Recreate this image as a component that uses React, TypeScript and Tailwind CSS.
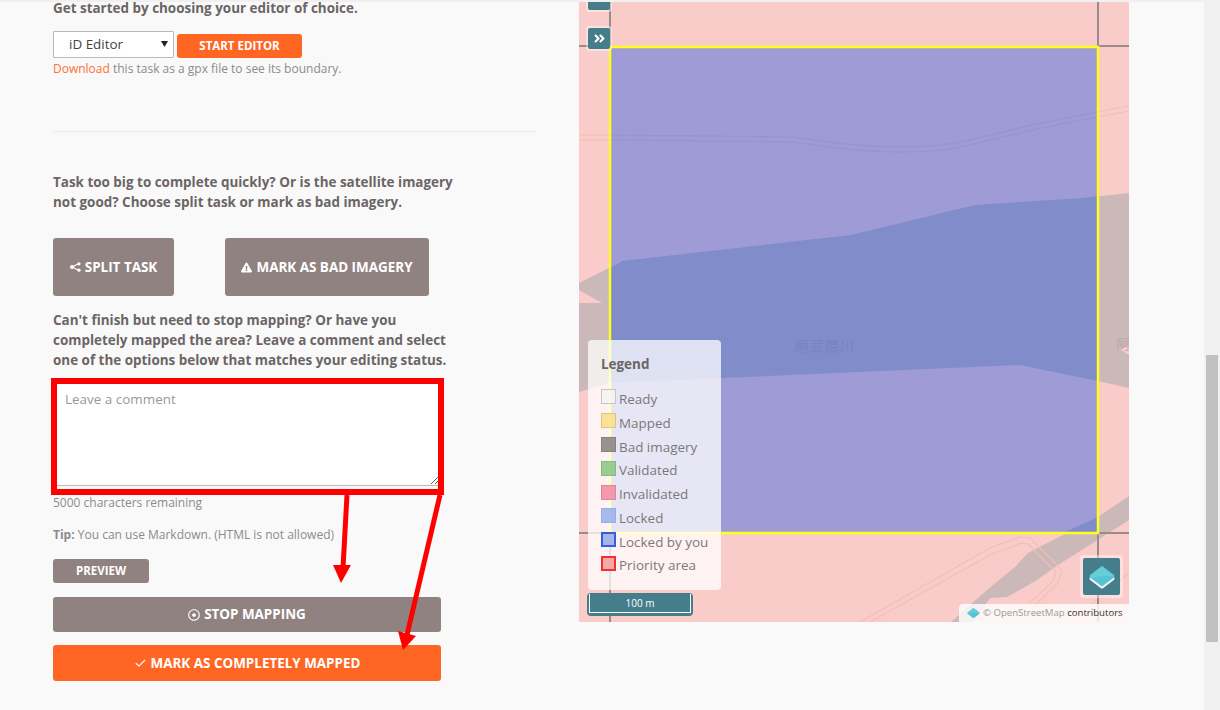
import { Check } from "lucide-react";
import { FaAngleDoubleRight, FaExclamationTriangle, FaRegDotCircle } from "react-icons/fa";

const legendItems = [
  { name: "Ready", swatch: "border bg-[#f7f4f4] border-[#c4c1c1]" },
  { name: "Mapped", swatch: "border bg-[#fbe08c] border-[#d8c27e]" },
  { name: "Bad imagery", swatch: "border bg-[#8f8888] border-[#7c7575]" },
  { name: "Validated", swatch: "border bg-[#8fc98a] border-[#7db578]" },
  { name: "Invalidated", swatch: "border bg-[#f48fa6] border-[#d87f94]" },
  { name: "Locked", swatch: "border bg-[#9db4ee] border-[#8ea6e4]" },
  { name: "Locked by you", swatch: "border-2 bg-[#9db0e6] border-[#1c50e0]" },
  { name: "Priority area", swatch: "border-2 bg-[#f9a0a0] border-[#f01c1c]" },
];

const ShareIcon = () => (
  <svg width="11" height="10" viewBox="0 0 11 10" className="mr-[4px]">
    <path d="M2 5 9 1.6M2 5 9 8.4" stroke="white" strokeWidth="1.1" fill="none" />
    <circle cx="2" cy="5" r="2" fill="white" />
    <circle cx="9" cy="1.8" r="1.6" fill="white" />
    <circle cx="9" cy="8.2" r="1.6" fill="white" />
  </svg>
);

const LayersGlyph = ({ size }: { size: number }) => (
  <svg width={size} height={size} viewBox="0 0 36 36">
    <path d="M18 10 31 20 18 30 5 20Z" fill="#f4f4f4" stroke="#f4f4f4" strokeWidth="4" strokeLinejoin="round" />
    <path d="M18 7 31 17 18 27 5 17Z" fill="#55c4d2" stroke="#55c4d2" strokeWidth="4" strokeLinejoin="round" />
    <path d="M18 7 30 16C22 15 12 16 6 19 5 18 5 17 6 16Z" fill="#68cdd9" stroke="#68cdd9" strokeWidth="2" strokeLinejoin="round" />
  </svg>
);

const MapCanvas = () => (
  <div className="relative h-[620px] w-[550px] shrink-0 overflow-hidden bg-[#f9cbc9] font-['Open_Sans',sans-serif]">
    <svg width="550" height="620" viewBox="579 2 550 620" className="absolute left-0 top-0">
      {/* river and roads under the task */}
      <path
        d="M579 283 609 268 622 261 851 235 975 205 1083 198 1129 193V388L1098 381 1020 365 721 378 609 383 579 392V303H602L579 290Z"
        fill="#cbb8b8"
      />
      <path d="M1129 345 1121 350 1129 355Z" fill="#f9cbc9" />
      <path d="M1129 496 1098 517 1063 535 1028 553 1015 567 987 590 950 623H973L990 598 1007 597 1037 580 1058 565 1129 520Z" fill="#cbb8b8" />
      <path d="M579 135 792 137C830 142 860 147 900 147 930 147 960 144 985 136L1060 119 1129 106" stroke="#efbfba" strokeWidth="1.2" fill="none" />
      <path d="M579 140 792 142C830 147 860 152 900 152 930 152 960 149 985 141L1060 124 1129 111" stroke="#efbfba" strokeWidth="1.2" fill="none" />
      <path d="M860 622 990 548 1020 537 1030 538 1062 570 1058 583 1018 622" stroke="#f0bfb9" strokeWidth="1.2" fill="none" />
      <path d="M870 622 990 555 1021 543 1028 544 1056 572 1053 581 1010 622" stroke="#f0bfb9" strokeWidth="1.2" fill="none" />
      <path d="M1129 573 1085 610" stroke="#f0bfb9" strokeWidth="1.2" fill="none" />
      {/* task grid */}
      <path d="M610 2V46M579 46H610M1098 2V46H1129M610 533V622M579 533H610M1098 533V622M1098 533H1129" stroke="#9a8a8a" strokeWidth="2" fill="none" />
      {/* task */}
      <rect x="610" y="47" width="488" height="486" fill="#9e9bd6" />
      <path d="M610 268 622 261 851 235 975 205 1083 198 1098 196V381L1020 365 721 378 610 383Z" fill="#808dca" />
      <path d="M1098 517 1063 533H1098Z" fill="#808dca" />
      <path d="M610 135 792 137C830 142 860 147 900 147 930 147 960 144 985 136L1060 119 1098 112M610 140 792 142C830 147 860 152 900 152 930 152 960 149 985 141L1060 124 1098 117" stroke="#9892cd" strokeWidth="1.2" fill="none" />
      <rect x="610" y="47" width="488" height="486" fill="none" stroke="#ffff1e" strokeWidth="2.5" />
    </svg>

    <span className="absolute left-[216px] top-[333px] font-['Noto_Sans_CJK_JP',sans-serif] text-[14px] leading-5 tracking-[1px] text-[#7784c0]">
      阿武隈川
    </span>
    <span className="absolute left-[537px] top-[331px] font-['Noto_Sans_CJK_JP',sans-serif] text-[14px] leading-5 text-[#bca9a9]">
      阿
    </span>

    <div className="absolute left-[7px] top-[-8px] rounded-[3px] bg-white/40 p-[2px]">
      <div className="h-[14px] w-[22px] rounded-[2px] bg-[#467d8b]" />
    </div>
    <div className="absolute left-[7px] top-[24px] rounded-[3px] bg-white/40 p-[2px]">
      <div className="flex h-[21px] w-[22px] items-center justify-center rounded-[2px] bg-[#467d8b] text-white">
        <FaAngleDoubleRight size={13} />
      </div>
    </div>

    {/* legend */}
    <div className="absolute left-[9px] top-[338px] h-[250px] w-[133px] rounded-[4px] bg-white/75 pl-[13px] pt-[15px] text-[13.44px] text-[#7d7878]">
      <p className="mb-[13px] h-[19px] font-bold leading-[19px] text-[#6b6565]">Legend</p>
      {legendItems.map((item) => (
        <div key={item.name} className="flex h-[23.8px] items-center">
          <span className={`mr-[3px] -mt-[4px] h-[15px] w-[15px] opacity-90 ${item.swatch}`} />
          <span className="leading-6">{item.name}</span>
        </div>
      ))}
    </div>

    {/* scale */}
    <div className="absolute left-[8px] top-[591px] flex h-[23px] w-[106px] rounded-[4px] bg-[#467d8b] px-[2px] pb-[3px] pt-[1px]">
      <div className="flex flex-1 items-center justify-center border-x border-b border-white text-[10px] leading-none text-white">
        100 m
      </div>
    </div>

    {/* layers switch */}
    <div className="absolute left-[501px] top-[553px] rounded-[3px] bg-white/40 p-[3px]">
      <div className="flex h-[37px] w-[37px] items-center justify-center rounded-[2px] bg-[#467d8b]">
        <LayersGlyph size={30} />
      </div>
    </div>

    {/* attribution */}
    <div className="absolute left-[380px] top-[602px] flex h-[18px] w-[170px] items-center rounded-tl-[4px] bg-white/80 pl-[7px] text-[9.6px] text-[#9a9a9a]">
      <LayersGlyph size={15} />
      <span className="ml-[2px] whitespace-nowrap">
        © OpenStreetMap <span className="text-[#333333]">contributors</span>
      </span>
    </div>
  </div>
);

export default function App() {
  return (
    <div className="relative flex h-[710px] w-[1220px] overflow-hidden bg-[#f9f9f9] font-['Open_Sans',sans-serif] text-[13.44px] text-[#6b6565]">
      <div className="flex flex-1 border-t-2 border-[#f0f0f0]">
        <div className="w-[579px] shrink-0 pl-[53px]">
          <p className="-mt-[2px] h-4 whitespace-nowrap font-bold leading-4 text-[#6b6565]">Get started by choosing your editor of choice.</p>

          <div className="mt-[15px] flex items-end">
            <div className="relative h-[27px] w-[121px]">
              <select className="h-full w-full appearance-none rounded-[1px] border border-[#b9b9b9] bg-white pl-[15px] text-[13.44px] text-[#444444]">
                <option>iD Editor</option>
              </select>
              <svg width="7" height="6" viewBox="0 0 7 6" className="pointer-events-none absolute left-[108px] top-[10px]">
                <path d="M0 0H7L3.5 6Z" fill="#222222" />
              </svg>
            </div>
            <button className="ml-[3px] h-[24px] w-[125px] rounded-[3px] bg-[#ff6624] text-[11.5px] font-bold uppercase text-white">
              Start Editor
            </button>
          </div>
          <p className="mt-[1px] text-[12px] leading-5 text-[#8b8b8b]">
            <span className="text-[#ff6f36]">Download</span> this task as a gpx file to see its boundary.
          </p>

          <div className="mt-[52px] h-px w-[483px] bg-[#e9e9e9]" />

          <p className="mt-[40px] w-[400px] font-bold leading-5">
            Task too big to complete quickly? Or is the satellite imagery not good? Choose split task or mark as bad imagery.
          </p>

          <div className="mt-[26px] flex gap-[51px]">
            <button className="flex h-[58px] w-[121px] items-center justify-center rounded-[3px] bg-[#918282] font-bold uppercase text-white">
              <ShareIcon />
              Split Task
            </button>
            <button className="flex h-[58px] w-[204px] items-center justify-center rounded-[3px] bg-[#918282] font-bold uppercase text-white">
              <FaExclamationTriangle size={11} className="mr-[4px]" />
              Mark as bad imagery
            </button>
          </div>

          <p className="mt-[14px] w-[400px] font-bold leading-5">
            Can't finish but need to stop mapping? Or have you completely mapped the area? Leave a comment and select one of the options below that matches your editing status.
          </p>

          <textarea
            placeholder="Leave a comment"
            className="mt-[12px] block h-[104px] w-[386px] border-b border-[#b9b9b9] bg-white px-[12px] pt-[7px] text-[13.44px] leading-5 placeholder:text-[#999999]"
          />

          <p className="mt-[7px] text-[12px] leading-5 text-[#8b8b8b]">5000 characters remaining</p>
          <p className="mt-[12px] text-[12px] leading-5 text-[#8b8b8b]">
            <span className="font-bold">Tip:</span> You can use Markdown. (HTML is not allowed)
          </p>

          <button className="mt-[14px] block h-[24px] w-[96px] rounded-[3px] bg-[#918282] text-[11.5px] font-bold uppercase text-white">
            Preview
          </button>
          <button className="mt-[14px] flex h-[35px] w-[388px] items-center justify-center rounded-[3px] bg-[#918282] font-bold uppercase text-white">
            <FaRegDotCircle size={12} className="mr-[4px]" />
            Stop Mapping
          </button>
          <button className="mt-[13px] flex h-[36px] w-[388px] items-center justify-center rounded-[3px] bg-[#ff6624] font-bold uppercase text-white">
            <Check size={13} className="mr-[4px]" />
            Mark as completely mapped
          </button>
        </div>
        <MapCanvas />
        <div className="flex-1" />
      </div>

      {/* scrollbar */}
      <div className="relative w-[16px] shrink-0 bg-[#f1f1f1]">
        <div className="absolute left-[2px] top-[355px] h-[287px] w-[12px] bg-[#c1c1c1]" />
      </div>

      {/* red annotation over the page */}
      <div className="pointer-events-none absolute left-[51px] top-[378px] h-[117px] w-[393px] border-[6px] border-[#ff0000]" />
      <svg width="1220" height="710" className="pointer-events-none absolute left-0 top-0">
        <path d="M347 495 343 568" stroke="#ff0000" strokeWidth="5" fill="none" />
        <path d="M333 565H351L341 583Z" fill="#ff0000" />
        <path d="M440 495 407 635" stroke="#ff0000" strokeWidth="5" fill="none" />
        <path d="M398 631 416 636 403 650Z" fill="#ff0000" />
      </svg>
    </div>
  );
}
